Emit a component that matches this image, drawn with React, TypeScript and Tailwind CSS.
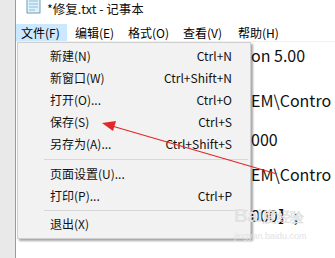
import React from "react"

const FONT = { fontFamily: '"Noto Sans CJK SC", "Noto Sans", sans-serif' }

type Item = { label: string; keys?: string } | { sep: number }

const items: Item[] = [
  { label: "新建(N)", keys: "Ctrl+N" },
  { label: "新窗口(W)", keys: "Ctrl+Shift+N" },
  { label: "打开(O)...", keys: "Ctrl+O" },
  { label: "保存(S)", keys: "Ctrl+S" },
  { label: "另存为(A)...", keys: "Ctrl+Shift+S" },
  { sep: 8 },
  { label: "页面设置(U)..." },
  { label: "打印(P)...", keys: "Ctrl+P" },
  { sep: 6 },
  { label: "退出(X)" },
]

const menus = [
  { label: "文件(F)", cls: "w-[51px] pl-[5px] bg-[#cce8ff]" },
  { label: "编辑(E)", cls: "w-[55px] pl-[8px]" },
  { label: "格式(O)", cls: "w-[55px] pl-[6px]" },
  { label: "查看(V)", cls: "w-[55px] pl-[6px]" },
  { label: "帮助(H)", cls: "w-[55px] pl-[6px]" },
]

function NotepadIcon() {
  return (
    <svg width="20" height="16" viewBox="0 0 20 16" className="-mt-[3px]">
      <rect x="3" y="0" width="13" height="15" fill="#dff1fb" stroke="#6d9db8" strokeWidth="1" />
      <path d="M5 3h9M5 6h9M5 9h9M5 12h6" stroke="#8fbad2" strokeWidth="1" />
    </svg>
  )
}

export default function App() {
  return (
    <div className="relative w-[335px] h-[258px] overflow-hidden bg-white flex text-black" style={FONT}>
      {/* left desktop strip */}
      <div className="w-[16px] shrink-0 bg-[#e9e9e9] border-r border-[#9a9a9a]" />

      <div className="flex-1 flex flex-col">
        {/* title bar */}
        <div className="h-[24px] flex items-start gap-[3px] pl-[8px] pt-[1px]">
          <NotepadIcon />
          <span className="text-[12.5px] leading-[16px] text-[#111]">*修复.txt - 记事本</span>
        </div>

        {/* menu bar */}
        <div className="h-[18px] flex items-stretch border-b border-[#f0f0f0]">
          {menus.map((m) => (
            <div key={m.label} className={`${m.cls} flex items-center text-[12px] leading-none`}>
              {m.label}
            </div>
          ))}
        </div>

        {/* editor */}
        <div className="flex-1 pl-[235px] text-[16px] leading-[20px] text-[#111] whitespace-nowrap">
          <div className="mt-[3px]">on 5.00</div>
          <div className="mt-[25px]">EM\Contro</div>
          <div className="mt-[19px]">000</div>
          <div className="mt-[15px]">EM\Contro</div>
          <div className="mt-[21px]">000】;</div>
        </div>
      </div>

      {/* file menu */}
      <div className="absolute left-[17px] top-[42px] w-[234px] bg-[#f2f2f2] border border-[#cfcfcf] pt-[2px] pb-[3px] shadow-[2px_2px_2px_rgba(0,0,0,0.35)]">
        {items.map((it, i) =>
          "sep" in it ? (
            <div key={i} className={`${it.sep === 8 ? "h-[8px]" : "h-[6px]"} flex items-center pl-[26px] pr-[2px]`}>
              <div className="h-px w-full bg-[#d7d7d7]" />
            </div>
          ) : (
            <div key={i} className="h-[22px] flex items-center justify-between pl-[32px] pr-[18px] text-[12px] leading-none text-[#111]">
              <span>{it.label}</span>
              {it.keys && <span>{it.keys}</span>}
            </div>
          )
        )}
      </div>

      {/* watermark */}
      <div className="absolute left-[234px] top-[206px] flex flex-col items-start text-[#e2e2e2] pointer-events-none">
        <span className="text-[19px] leading-[19px] font-bold tracking-tight" style={{ fontFamily: '"Liberation Sans", sans-serif' }}>
          Bai<span className="text-[15px]">度</span><span className="text-[14px]">经验</span>
        </span>
        <span className="text-[9px] leading-[10px] mt-[4px]" style={{ fontFamily: '"Liberation Sans", sans-serif' }}>jingyan.baidu.com</span>
      </div>

      {/* red arrow */}
      <svg className="absolute left-0 top-0 pointer-events-none" width="335" height="258" viewBox="0 0 335 258">
        <line x1="277" y1="174" x2="112" y2="126" stroke="#e02828" strokeWidth="1.2" />
        <polygon points="102,123 116,121 113,131" fill="#e02828" />
      </svg>
    </div>
  )
}
